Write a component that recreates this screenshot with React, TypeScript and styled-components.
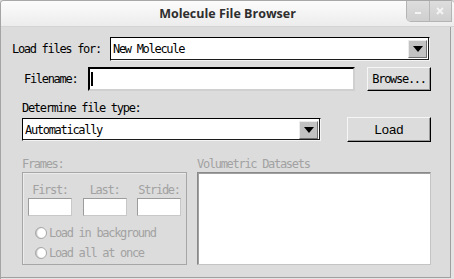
import React from "react";
import styled, { createGlobalStyle } from "styled-components";

const Global = createGlobalStyle`
  * {
    box-sizing: border-box;
  }
  body {
    margin: 0;
    background: #dcdcdc;
  }
`;

const TkFont = `
  font-family: "DejaVu Sans Mono", "Liberation Mono", monospace;
  font-size: 12px;
  letter-spacing: -1.3px;
`;

const App: React.FC = () => {
  return (
    <Window>
      <Global />
      <TitleBar>
        <span />
        <Title>Molecule File Browser</Title>
        <WinButtons>
          <WinButton>
            <svg width="8" height="8" viewBox="0 0 8 8">
              <rect x="1" y="5" width="6" height="2" fill="#f4f4f4" />
            </svg>
          </WinButton>
          <WinButton>
            <svg width="8" height="8" viewBox="0 0 8 8">
              <path d="M1 1 L7 7 M7 1 L1 7" stroke="#f4f4f4" strokeWidth="2" />
            </svg>
          </WinButton>
        </WinButtons>
      </TitleBar>

      <Body>
        <Row $indent={11} $height={24}>
          <Label $width={98}>Load files for:</Label>
          <Combo $width={320}>
            <ComboText>New Molecule</ComboText>
            <ArrowButton>
              <Arrow />
            </ArrowButton>
          </Combo>
        </Row>

        <Row $indent={23} $top={6} $height={24}>
          <Label $width={64}>Filename:</Label>
          <Entry $width={267}>
            <Caret />
          </Entry>
          <Button $width={64} $left={12} $height={24}>
            Browse...
          </Button>
        </Row>

        <SectionLabel $indent={21}>Determine file type:</SectionLabel>

        <Row $indent={21} $top={1}>
          <Combo $width={299} $height={23}>
            <ComboText>Automatically</ComboText>
            <ArrowButton>
              <Arrow />
            </ArrowButton>
          </Combo>
          <Button $width={84} $left={26} $sans>
            Load
          </Button>
        </Row>

        <Bottom>
          <Column $width={165}>
            <DisabledLabel>Frames:</DisabledLabel>
            <GroupBox>
              <FieldGrid>
                {["First:", "Last:", "Stride:"].map((f) => (
                  <Field key={f}>
                    <DisabledLabel $center>{f}</DisabledLabel>
                    <SmallEntry />
                  </Field>
                ))}
              </FieldGrid>
              <RadioList>
                <RadioRow>
                  <Radio />
                  <DisabledLabel>Load in background</DisabledLabel>
                </RadioRow>
                <RadioRow>
                  <Radio />
                  <DisabledLabel>Load all at once</DisabledLabel>
                </RadioRow>
              </RadioList>
            </GroupBox>
          </Column>
          <Column $width={234}>
            <DisabledLabel>Volumetric Datasets</DisabledLabel>
            <ListBox />
          </Column>
        </Bottom>
      </Body>
    </Window>
  );
};

export default App;

// style
const Window = styled.div`
  width: 454px;
  height: 279px;
  display: flex;
  flex-direction: column;
  background: #e4e4e4;
  border-left: 1px solid #a4a4a4;
  border-top: 1px solid #a8a8a8;
  border-radius: 4px 4px 0 0;
  overflow: hidden;
`;

const TitleBar = styled.div`
  height: 26px;
  display: grid;
  grid-template-columns: 48px 1fr 48px;
  align-items: start;
  background: linear-gradient(#fcfcfc, #ececec);
  border-bottom: 1px solid #d4d4d4;
`;

const Title = styled.div`
  font-family: "Open Sans", "Noto Sans", sans-serif;
  font-weight: 700;
  font-size: 12.5px;
  line-height: 26px;
  color: #2e2e2e;
  text-align: center;
`;

const WinButtons = styled.div`
  display: flex;
  height: 22px;
  margin-right: 2px;
  margin-top: -1px;
  border: 1px solid #b4b4b4;
  border-top: none;
  border-radius: 0 0 0 5px;
  overflow: hidden;
`;

const WinButton = styled.div`
  flex: 1;
  display: flex;
  align-items: center;
  justify-content: center;
  background: linear-gradient(#dedede, #cfcfcf);

  & + & {
    border-left: 1px solid #b8b8b8;
  }
`;

const Body = styled.div`
  flex: 1;
  display: flex;
  flex-direction: column;
  background: #dcdcdc;
  margin-right: 3px;
  margin-bottom: 1px;
  border-right: 1px solid #a0a0a0;
  border-bottom: 1px solid #a0a0a0;
  padding-top: 10px;
`;

const Row = styled.div<{ $indent: number; $top?: number; $height?: number }>`
  display: flex;
  align-items: center;
  padding-left: ${(p) => p.$indent}px;
  margin-top: ${(p) => p.$top ?? 0}px;
  height: ${(p) => p.$height ?? 25}px;
`;

const Label = styled.div<{ $width: number }>`
  ${TkFont}
  width: ${(p) => p.$width}px;
  color: #000;
  white-space: nowrap;
`;

const SectionLabel = styled.div<{ $indent: number }>`
  ${TkFont}
  padding-left: ${(p) => p.$indent}px;
  margin-top: 9px;
  line-height: 16px;
  color: #000;
`;

const Combo = styled.div<{ $width: number; $height?: number }>`
  width: ${(p) => p.$width}px;
  height: ${(p) => p.$height ?? 24}px;
  display: flex;
  align-items: center;
  background: #fff;
  border: 1px solid;
  border-color: #000 #f4f4f4 #f4f4f4 #000;
  box-shadow: inset -1px -1px 0 #1c1c1c;
  padding: 0 2px 0 2px;
`;

const ComboText = styled.div`
  ${TkFont}
  flex: 1;
  color: #000;
  white-space: nowrap;
`;

const ArrowButton = styled.div`
  width: 19px;
  height: 18px;
  display: flex;
  align-items: center;
  justify-content: center;
  background: #c2c2c2;
  border: 1px solid;
  border-color: #ececec #707070 #707070 #ececec;
`;

const Arrow = styled.div`
  width: 0;
  height: 0;
  border-left: 5px solid transparent;
  border-right: 5px solid transparent;
  border-top: 6px solid #000;
`;

const Entry = styled.div<{ $width: number }>`
  width: ${(p) => p.$width}px;
  height: 24px;
  display: flex;
  align-items: center;
  background: #fff;
  border: 2px solid;
  border-color: #000 #d0d0d0 #d0d0d0 #000;
  padding-left: 1px;
`;

const Caret = styled.div`
  width: 2px;
  height: 14px;
  background: #000;
`;

const Button = styled.div<{
  $width: number;
  $left: number;
  $sans?: boolean;
  $height?: number;
}>`
  ${(p) =>
    p.$sans
      ? `font-family: "Liberation Sans", "Arial", sans-serif; font-size: 13px;`
      : TkFont}
  width: ${(p) => p.$width}px;
  height: ${(p) => p.$height ?? 25}px;
  margin-left: ${(p) => p.$left}px;
  display: flex;
  align-items: center;
  justify-content: center;
  color: #000;
  background: #dcdcdc;
  border: 1px solid;
  border-color: #f6f6f6 #000 #000 #f6f6f6;
  box-shadow: inset -1px -1px 0 #9a9a9a;
`;

const Bottom = styled.div`
  display: flex;
  gap: 10px;
  padding-left: 21px;
  margin-top: 14px;
`;

const Column = styled.div<{ $width: number }>`
  width: ${(p) => p.$width}px;
  display: flex;
  flex-direction: column;
`;

const DisabledLabel = styled.div<{ $center?: boolean }>`
  ${TkFont}
  line-height: 16px;
  color: #a2a2a2;
  white-space: nowrap;
  text-align: ${(p) => (p.$center ? "center" : "left")};
`;

const GroupBox = styled.div`
  height: 93px;
  border: 1px solid #a6a6a6;
  box-shadow: inset 1px 1px 0 #ececec;
  padding: 9px 5px 0 5px;
`;

const FieldGrid = styled.div`
  width: 153px;
  display: flex;
  justify-content: space-between;
`;

const Field = styled.div`
  width: 44px;
  display: flex;
  flex-direction: column;
`;

const SmallEntry = styled.div`
  height: 18px;
  background: #fff;
  border: 1px solid;
  border-color: #9c9c9c #c8c8c8 #c8c8c8 #9c9c9c;
`;

const RadioList = styled.div`
  display: flex;
  flex-direction: column;
  margin-top: 7px;
  padding-left: 7px;
`;

const RadioRow = styled.div`
  display: flex;
  align-items: center;
  gap: 2px;
  height: 20px;
`;

const Radio = styled.div`
  width: 12px;
  height: 12px;
  border-radius: 50%;
  border: 1px solid #a8a8a8;
  background: radial-gradient(circle at 65% 50%, #fff 55%, #c8c8c8 75%);
`;

const ListBox = styled.div`
  height: 93px;
  background: #fff;
  border: 1px solid;
  border-color: #8a8a8a #c4c4c4 #c4c4c4 #8a8a8a;
  box-shadow: inset 1px 1px 0 #a0a0a0;
`;
